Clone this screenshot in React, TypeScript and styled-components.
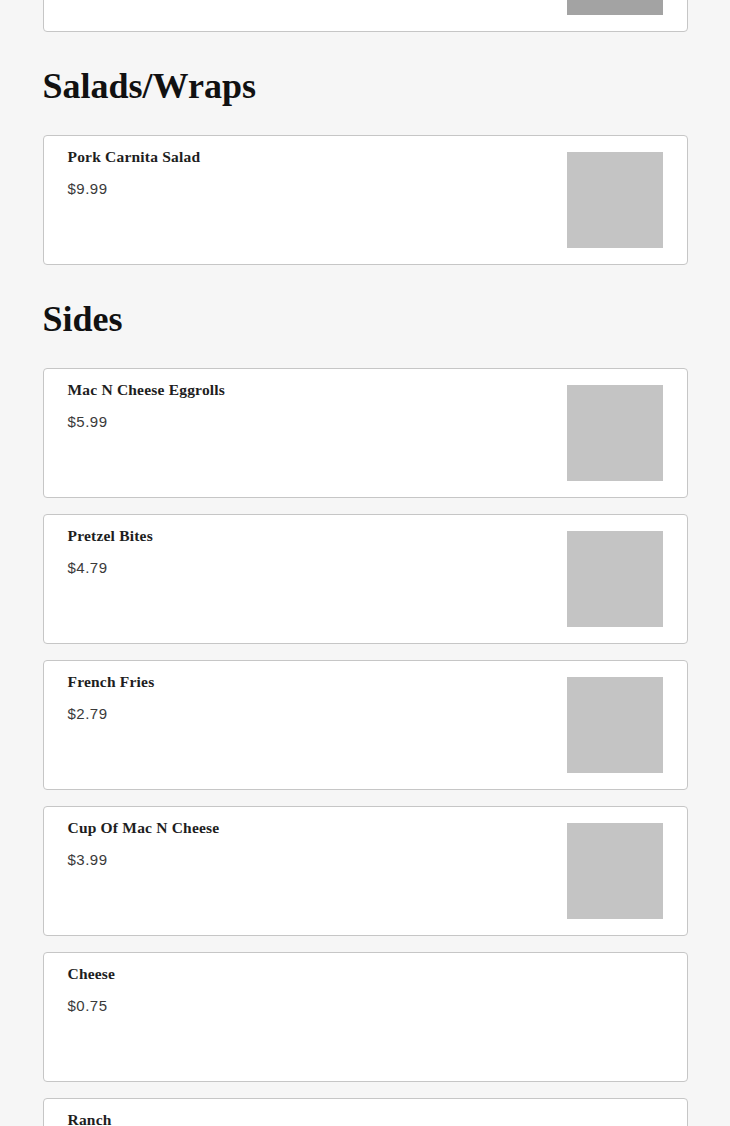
import React from "react";
import styled, { createGlobalStyle } from "styled-components";

interface MenuItem {
  name: string;
  price: string;
  image?: "light" | "dark";
}

interface MenuSection {
  title?: string;
  items: Array<MenuItem>;
}

const sections: Array<MenuSection> = [
  { items: [{ name: "", price: "", image: "dark" }] },
  {
    title: "Salads/Wraps",
    items: [{ name: "Pork Carnita Salad", price: "$9.99", image: "light" }],
  },
  {
    title: "Sides",
    items: [
      { name: "Mac N Cheese Eggrolls", price: "$5.99", image: "light" },
      { name: "Pretzel Bites", price: "$4.79", image: "light" },
      { name: "French Fries", price: "$2.79", image: "light" },
      { name: "Cup Of Mac N Cheese", price: "$3.99", image: "light" },
      { name: "Cheese", price: "$0.75" },
      { name: "Ranch", price: "$0.75" },
    ],
  },
];

const GlobalStyle = createGlobalStyle`
  html, body {
    margin: 0;
    padding: 0;
    background: #f6f6f6;
    overflow: hidden;
  }
`;

const Page = styled.div`
  max-width: 645px;
  margin: -98px auto 0;
  display: flex;
  flex-direction: column;
`;

const Section = styled.section`
  display: flex;
  flex-direction: column;
  gap: 16px;
`;

const Heading = styled.h2`
  margin: 34px 0 29px;
  font-family: "Liberation Serif", "Times New Roman", serif;
  font-size: 36px;
  line-height: 40px;
  font-weight: 700;
  color: #111;
`;

const Card = styled.div`
  box-sizing: border-box;
  height: 130px;
  background: #fff;
  border: 1px solid #c6c6c6;
  border-radius: 4px;
  padding: 16px 24px;
  display: flex;
  align-items: flex-start;
  justify-content: space-between;
`;

const Info = styled.div`
  display: flex;
  flex-direction: column;
  margin-top: -5px;
`;

const Name = styled.h3`
  margin: 0;
  font-family: "Liberation Serif", "Times New Roman", serif;
  font-size: 15.5px;
  line-height: 20px;
  letter-spacing: 0.2px;
  font-weight: 700;
  color: #1e1e1e;
`;

const Price = styled.span`
  margin-top: 12px;
  font-family: "Liberation Sans", Arial, sans-serif;
  font-size: 15px;
  line-height: 20px;
  letter-spacing: 0.5px;
  color: #3a3a3a;
`;

const Thumb = styled.div<{ $tone: "light" | "dark" }>`
  flex: none;
  width: 96px;
  height: 96px;
  background: ${({ $tone }) => ($tone === "dark" ? "#a3a3a3" : "#c4c4c4")};
`;

const App: React.FC = () => {
  return (
    <>
      <GlobalStyle />
      <Page>
        {sections.map((section, i) => (
          <div key={`Section-${i}`}>
            {section.title && <Heading>{section.title}</Heading>}
            <Section>
              {section.items.map((item, j) => (
                <Card key={`Item-${i}-${j}`}>
                  <Info>
                    <Name>{item.name}</Name>
                    {item.price && <Price>{item.price}</Price>}
                  </Info>
                  {item.image && <Thumb $tone={item.image} />}
                </Card>
              ))}
            </Section>
          </div>
        ))}
      </Page>
    </>
  );
};

export default App;
